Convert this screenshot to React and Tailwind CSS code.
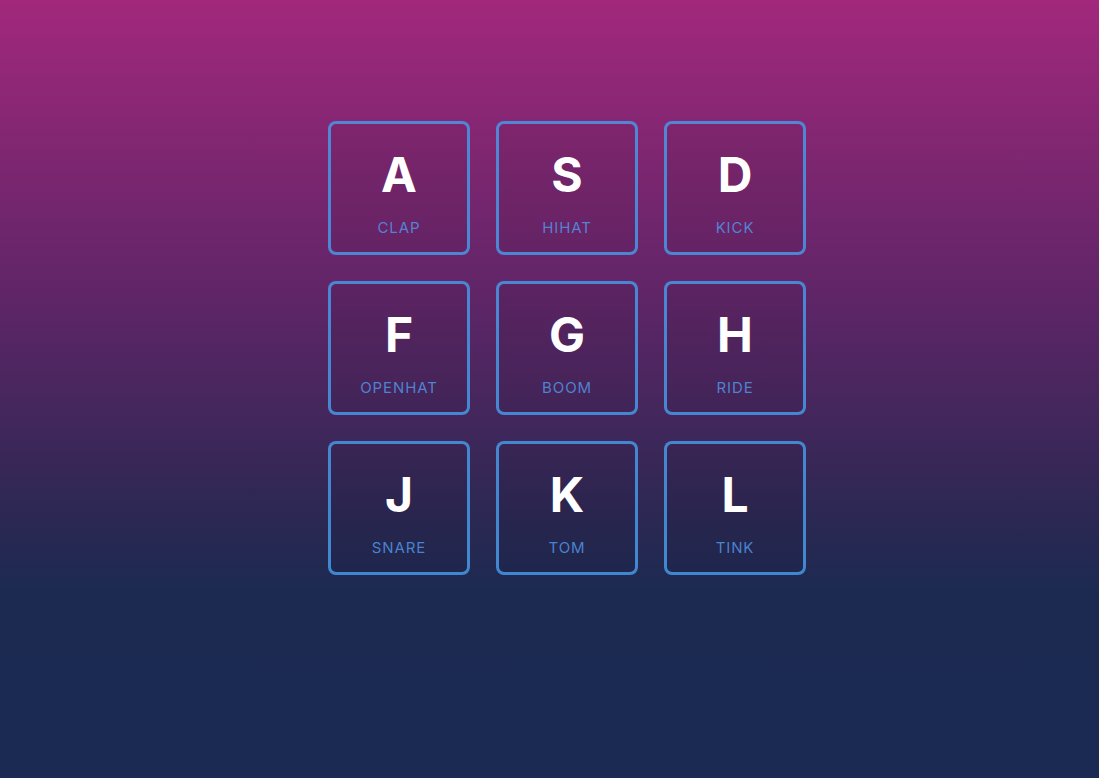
import React from "react";

const keys = [
  ["A", "CLAP"],
  ["S", "HIHAT"],
  ["D", "KICK"],
  ["F", "OPENHAT"],
  ["G", "BOOM"],
  ["H", "RIDE"],
  ["J", "SNARE"],
  ["K", "TOM"],
  ["L", "TINK"],
];

export default function App() {
  return (
    <div
      className="w-full h-[778px] bg-[linear-gradient(to_bottom,#a2287c_0%,#5f2567_38%,#2c2853_66%,#1c2a52_76%,#1b2a52_100%)] pt-[121px] pl-[328px]"
      style={{ fontFamily: "Inter, 'Open Sans', sans-serif" }}
    >
      <div className="grid grid-cols-[repeat(3,142px)] auto-rows-[134px] gap-[26px] w-max">
        {keys.map(([k, s]) => (
          <div
            key={k}
            className="flex flex-col items-center justify-center pt-[10px] rounded-[8px] border-[3px] border-[rgba(72,152,230,0.85)] bg-black/5"
          >
            <kbd className="text-[48px] leading-none font-bold text-white not-italic" style={{ fontFamily: "Inter, sans-serif" }}>
              {k}
            </kbd>
            <span className="mt-[21px] text-[15px] leading-none tracking-[0.06em] text-[rgba(80,150,230,0.85)]">
              {s}
            </span>
          </div>
        ))}
      </div>
    </div>
  );
}
